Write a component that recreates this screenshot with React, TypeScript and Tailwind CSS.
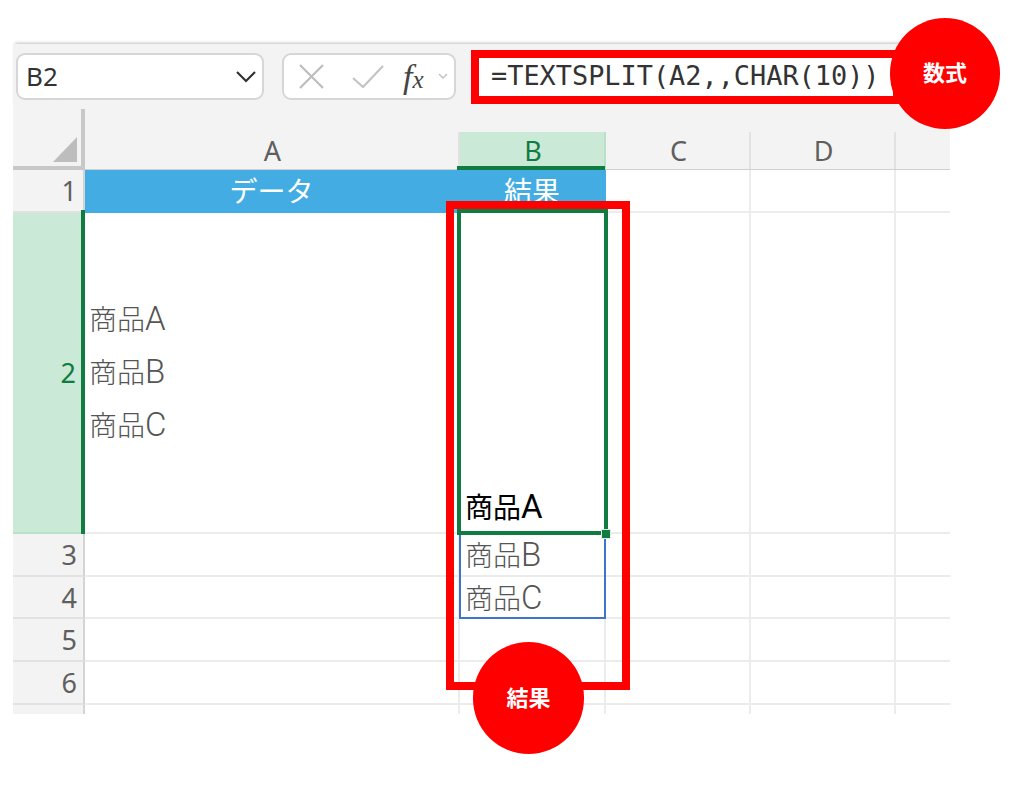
const cjk = "font-['Roboto','Noto_Sans_CJK_JP',sans-serif]"
const latin = "font-['Noto_Sans','Noto_Sans_CJK_JP',sans-serif]"

const columns = [
    { name: 'A', active: false },
    { name: 'B', active: true },
    { name: 'C', active: false },
    { name: 'D', active: false },
]

const rows = [
    { no: '1', h: 'h-[43px]', a: 'データ', b: '結果' },
    { no: '2', h: 'h-[321px]', a: '', b: 'A' },
    { no: '3', h: 'h-[43px]', a: '', b: 'B' },
    { no: '4', h: 'h-[42px]', a: '', b: 'C' },
    { no: '5', h: 'h-[43px]', a: '', b: '' },
    { no: '6', h: 'h-[43px]', a: '', b: '' },
]

const Item = ({ letter }: { letter: string }) => {
    return (
        <div className="whitespace-nowrap">
            商品<span className="text-[33px]">{letter}</span>
        </div>
    )
}

const Toolbar = () => {
    return (
        <div className="flex items-center h-[65px] bg-[#f3f3f3] shadow-[0_-3px_3px_-2px_rgba(0,0,0,0.25)]">
            <div className={`flex items-center justify-between w-[248px] h-[47px] ml-[3px] pl-[8px] pr-[6px] bg-white border-2 border-[#d6d6d6] rounded-[9px] text-[26px] text-[#333] ${latin}`}>
                <span>B2</span>
                <svg width="20" height="12" viewBox="0 0 20 12" fill="none" stroke="#333" strokeWidth="2.2"><path d="M1 1l9 9 9-9" /></svg>
            </div>
            <div className="flex items-center w-[174px] h-[47px] ml-[18px] pl-[15px] bg-white border-2 border-[#d6d6d6] rounded-[9px]">
                <svg width="25" height="25" viewBox="0 0 25 25" fill="none" stroke="#bdbdbd" strokeWidth="2.2"><path d="M1 1l23 23M24 1L1 24" /></svg>
                <svg className="ml-[28px]" width="32" height="23" viewBox="0 0 32 23" fill="none" stroke="#c4c4c4" strokeWidth="2.2"><path d="M1 13l10 9L31 1" /></svg>
                <span className="ml-[19px] w-[24px] font-['Liberation_Serif',serif] italic text-[#444] text-[34px] leading-none whitespace-nowrap">f<span className="text-[25px]">x</span></span>
                <svg className="ml-[11px]" width="10" height="7" viewBox="0 0 10 7" fill="none" stroke="#c4c4c4" strokeWidth="1.5"><path d="M1 1l4 4 4-4" /></svg>
            </div>
            <div className="flex items-center w-[430px] h-[54px] ml-[15px] pl-[12px] bg-white border-8 border-[#ff0000] font-['DejaVu_Sans_Mono',monospace] text-[26.9px] text-[#333] whitespace-nowrap">
                =TEXTSPLIT(A2,,CHAR(10))
            </div>
        </div>
    )
}

const Sheet = () => {
    return (
        <div className={`grid grid-cols-[72px_375px_146px_145px_145px_54px] ${latin}`}>
            <div className="relative h-[61px] bg-[#f3f3f3] border-r-4 border-b-4 border-[#c8c8c8]">
                <svg className="absolute left-[40px] top-[28px]" width="24" height="25" viewBox="0 0 24 25"><path d="M24 0v25H0z" fill="#bdbdbd" /></svg>
            </div>
            {columns.map((col) => (
                <div key={col.name} className="flex flex-col h-[61px] bg-[#f3f3f3] border-b-[1px] border-[#cfcfcf]">
                    <div className={`relative flex items-center justify-center mt-[23px] pl-[2px] h-[37px] text-[27px] leading-none border-r-2 ${col.active ? 'bg-[#cae9d7] border-[#b9e0c9] text-[#107c41]' : 'border-[#e2e2e2] text-[#5f5f5f]'}`}>
                        {col.name}
                        {col.active && <div className="absolute -left-[3px] -right-[1px] -bottom-[1px] h-[4px] bg-[#107c41]" />}
                    </div>
                </div>
            ))}
            <div className="h-[61px] bg-[#f3f3f3] border-b-[1px] border-[#cfcfcf]" />

            {rows.map((row) => {
                const selected = row.no === '2'
                const title = row.no === '1'
                return (
                    <div key={row.no} className="contents">
                        <div className={`relative flex items-center justify-end text-[27px] leading-none border-b-2 ${row.h} ${selected ? 'bg-[#cae9d7] border-[#b9e0c9] pr-[9px] text-[#107c41]' : 'bg-[#f3f3f3] border-[#e2e2e2] border-r-2 border-r-[#d4d4d4] text-[#5f5f5f] pr-[6px]'}`}>
                            {row.no}
                            {selected && <div className="absolute right-0 -top-[3px] -bottom-[2px] w-[4px] bg-[#107c41]" />}
                        </div>
                        <div className={`leading-none border-r-2 border-b-2 ${title ? `flex items-center justify-center pt-[4px] bg-[#43ade3] border-[#43ade3] text-white text-[28px] ${cjk}` : `flex flex-col justify-center pl-[4px] pb-[2px] border-[#ececec] text-[#555] text-[28px] font-light ${cjk}`}`}>
                            {selected ? (
                                <>
                                    <div className="h-[52.7px] flex items-center"><Item letter="A" /></div>
                                    <div className="h-[52.7px] flex items-center"><Item letter="B" /></div>
                                    <div className="h-[52.7px] flex items-center"><Item letter="C" /></div>
                                </>
                            ) : (
                                row.a
                            )}
                        </div>
                        <div className={`flex leading-none border-r-2 border-b-2 text-[28px] ${cjk} ${title ? 'items-center justify-center pt-[4px] bg-[#43ade3] border-[#43ade3] text-white' : selected ? 'items-end pb-[9px] pl-[5px] border-[#ececec] text-black' : 'items-center pl-[5px] border-[#ececec] text-[#555] font-light'}`}>
                            {title ? row.b : row.b && <Item letter={row.b} />}
                        </div>
                        <div className="border-r-2 border-b-2 border-[#ececec]" />
                        <div className="border-r-2 border-b-2 border-[#ececec]" />
                        <div className="border-b-2 border-[#ececec]" />
                    </div>
                )
            })}

            <div className="h-[9px] bg-[#f3f3f3] border-r-2 border-[#d4d4d4]" />
            <div className="border-r-2 border-[#ececec]" />
            <div className="border-r-2 border-[#ececec]" />
            <div className="border-r-2 border-[#ececec]" />
            <div className="border-r-2 border-[#ececec]" />
            <div />
        </div>
    )
}

const Badge = ({ label, className }: { label: string; className: string }) => {
    return (
        <div className={`absolute flex items-center justify-center rounded-full bg-[#ff0000] text-white font-bold text-[22px] ${cjk} ${className}`}>
            {label}
        </div>
    )
}

const App = () => {
    return (
        <div className="relative w-[1024px] h-[798px] bg-white overflow-hidden pt-[44px] pl-[13px]">
            <div className="w-[937px]">
                <Toolbar />
                <Sheet />
            </div>

            {/* selection + callouts */}
            <div className="absolute left-[459px] top-[534px] w-[147px] h-[85px] border-2 border-t-0 border-[#3f73d0]" />
            <div className="absolute left-[457px] top-[209px] w-[151px] h-[326px] border-4 border-[#107c41]" />
            <div className="absolute left-[601px] top-[529px] w-[10px] h-[10px] bg-[#107c41] border border-[#d8eee0]" />
            <div className="absolute left-[446px] top-[201px] w-[184px] h-[489px] border-8 border-[#ff0000]" />
            <Badge label="数式" className="left-[890px] top-[18px] w-[110px] h-[111px]" />
            <Badge label="結果" className="left-[473px] top-[642px] w-[111px] h-[112px]" />
        </div>
    )
}

export default App
